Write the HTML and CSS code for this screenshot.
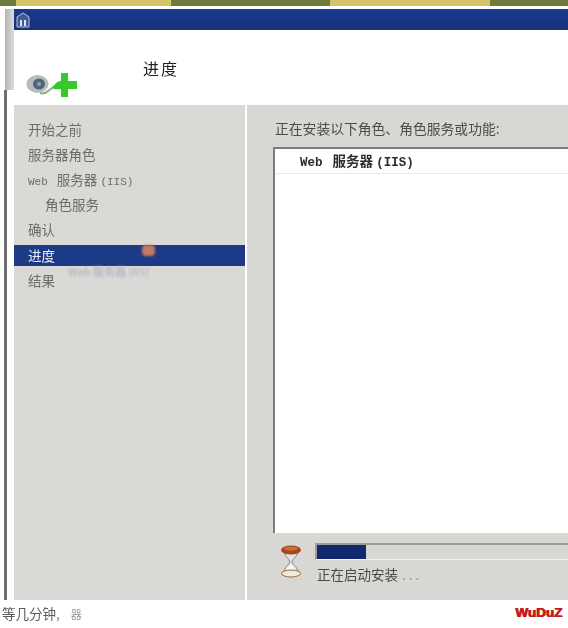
FILE: index.html
```html
<!DOCTYPE html>
<html lang="zh-CN">
<head>
    <meta charset="UTF-8">
    <meta name="viewport" content="width=device-width, initial-scale=1.0">
    <title>进度</title>
    <link rel="stylesheet" href="styles.css">
</head>
<body>
    <div class="topstrip">
        <div class="tab tab-first"></div>
        <div class="tab tab-second"></div>
    </div>
    <div class="desk">
        <div class="gutter">
            <div class="gutter-bar"></div>
            <div class="gutter-frame"></div>
        </div>
        <div class="window">
            <div class="titlebar">
                <svg class="title-icon" width="14" height="16" viewBox="0 0 14 16">
                    <path d="M1 5 L7 1 L13 5 V15 H1 Z" fill="#3f5a94" stroke="#b9c6de" stroke-width="1"/>
                    <path d="M4 8 H6 V14 H4 Z M8 8 H10 V14 H8 Z" fill="#dfe6f2"/>
                </svg>
            </div>
            <div class="header">
                <svg class="header-icon" width="56" height="28" viewBox="0 0 56 28">
                    <ellipse cx="11.5" cy="13" rx="11" ry="9" fill="#b4bec2"/>
                    <ellipse cx="13" cy="13" rx="6" ry="5.5" fill="#4f6676"/>
                    <circle cx="13" cy="13" r="2" fill="#8fa2ae"/>
                    <path d="M14 22 C20 24 24 18 30 14" fill="none" stroke="#8fae84" stroke-width="2"/>
                    <path d="M35 2 H42 V10 H51 V18 H42 V26 H35 V18 C31 18 29 19 26 17 C29 13 31 10 35 10 Z" fill="#35c92b"/>
                </svg>
                <div class="header-title">进度</div>
            </div>
            <div class="content">
                <div class="sidebar">
                    <div class="step">开始之前</div>
                    <div class="step">服务器角色</div>
                    <div class="step"><span class="latin latin-web">Web</span> 服务器 <span class="latin">(IIS)</span></div>
                    <div class="step step-sub">角色服务</div>
                    <div class="step">确认</div>
                    <div class="step step-active">进度<span class="blob"></span></div>
                    <div class="step step-result">结果<span class="ghost">Web 服务器 (IIS)</span></div>
                </div>
                <div class="main">
                    <div class="intro">正在安装以下角色、角色服务或功能:</div>
                    <div class="listbox">
                        <div class="list-row"><span class="latin latin-web">Web</span> 服务器 <span class="latin">(IIS)</span></div>
                    </div>
                    <div class="status">
                        <svg class="hourglass" width="22" height="33" viewBox="0 0 22 33">
                            <path d="M4 7 H18 C17 12 13 13 12 17 C13 20 18 22 18 28 H4 C4 22 9 20 10 17 C9 13 5 12 4 7 Z" fill="#dfe4e6" stroke="#85857f" stroke-width="1"/>
                            <path d="M5 27 C6 23 9 22 11 20 C13 22 16 23 17 27 Z" fill="#fbf8f0"/>
                            <ellipse cx="11" cy="5" rx="10" ry="4.5" fill="#a8481a"/>
                            <ellipse cx="11" cy="3.5" rx="7" ry="2" fill="#c9703a"/>
                            <ellipse cx="11" cy="28.5" rx="9.5" ry="3.5" fill="#f2eadb" stroke="#96683f" stroke-width="1"/>
                        </svg>
                        <div class="status-right">
                            <div class="progress"><div class="progress-fill"></div></div>
                            <div class="status-text">正在启动安装<span class="dots">...</span></div>
                        </div>
                    </div>
                </div>
            </div>
        </div>
    </div>
    <div class="footer">
        <div class="caption">等几分钟<span class="caption-dot">,</span><span class="caption-mark">器</span></div>
        <div class="brand">WuDuZ</div>
    </div>
</body>
</html>
```

FILE: styles.css
```css
html, body { margin: 0; padding: 0; }
body { width: 568px; height: 628px; overflow: hidden; background-color: #fff; font-family: "Noto Sans CJK SC", sans-serif; display: flex; flex-direction: column; }

.topstrip { height: 6px; background-color: #6d7a3c; display: flex; flex-shrink: 0; }
.tab { height: 6px; background-color: #d6c468; }
.tab-first { width: 155px; margin-left: 16px; }
.tab-second { width: 160px; margin-left: 159px; }

.desk { height: 594px; display: flex; flex-shrink: 0; padding-top: 3px; box-sizing: border-box; }
.gutter { width: 14px; flex-shrink: 0; display: flex; flex-direction: column; }
.gutter-bar { height: 81px; width: 9px; margin-left: 5px; background: linear-gradient(90deg, #b4b4b0, #dcdcd8); }
.gutter-frame { flex: 1; width: 5px; margin-left: 4px; border-left: 3px solid #6e6e6e; box-sizing: border-box; }

.window { flex: 1; min-width: 0; display: flex; flex-direction: column; }
.titlebar { height: 21px; background: linear-gradient(#1a3a8e, #16317c); display: flex; align-items: center; padding-left: 2px; flex-shrink: 0; }
.title-icon { display: block; }

.header { height: 75px; background-color: #fff; display: flex; flex-shrink: 0; }
.header-icon { margin: 41px 0 0 12px; filter: blur(0.5px); }
.header-title { margin: 27px 0 0 61px; font-size: 16px; line-height: 22px; color: #222; filter: blur(0.7px); letter-spacing: 2px; }

.content { flex: 1; display: flex; min-height: 0; }
.sidebar { width: 231px; flex-shrink: 0; background-color: #dbd9d5; padding-top: 14px; box-sizing: border-box; }
.step { height: 21px; margin-bottom: 4px; padding-left: 14px; font-size: 13.5px; line-height: 21px; color: #6c6c6a; white-space: nowrap; filter: blur(0.4px); position: relative; }
.step-sub { padding-left: 31px; }
.step-active { background-color: #1c3a86; color: #e8ecf5; top: 1px; }
.step-result { margin-top: 5px; }
.latin { font-family: "Liberation Mono", monospace; font-size: 11px; }
.latin-web { margin-right: 6px; }
.blob { position: absolute; left: 128px; top: 0; width: 13px; height: 11px; background-color: #c27a66; border-radius: 4px; filter: blur(1px); }
.ghost { position: absolute; left: 54px; top: -9px; font-size: 11px; color: #a9adc0; filter: blur(0.8px); }

.main { flex: 1; min-width: 0; margin-left: 2px; background-color: #d9d7d3; padding: 13px 0 0 26px; box-sizing: border-box; display: flex; flex-direction: column; }
.intro { margin-left: 2px; font-size: 13.8px; line-height: 20px; height: 29px; color: #4c4c4c; white-space: nowrap; filter: blur(0.4px); }
.listbox { height: 386px; background-color: #fff; border-top: 2px solid #7c7c7a; border-left: 2px solid #7c7c7a; box-sizing: border-box; flex-shrink: 0; }
.list-row { height: 25px; padding-left: 25px; font-size: 13.5px; font-weight: 700; line-height: 23px; color: #2c2c2c; border-bottom: 1px solid #e6ecf2; box-sizing: border-box; white-space: nowrap; filter: blur(0.4px); }
.list-row .latin { font-size: 12.5px; }
.list-row .latin-web { margin-right: 7px; }

.status { display: flex; padding-top: 10px; }
.hourglass { margin: 2px 0 0 7px; flex-shrink: 0; filter: blur(0.5px); }
.status-right { flex: 1; min-width: 0; margin-left: 13px; }
.progress { height: 17px; border-top: 2px solid #9b9b98; border-left: 2px solid #9b9b98; border-bottom: 1px solid #f3f3f0; box-sizing: border-box; background-color: #d9d7d3; }
.progress-fill { width: 49px; height: 14px; background-color: #12296f; }
.status-text { margin: 4px 0 0 2px; font-size: 13.5px; line-height: 20px; color: #4a4a4a; white-space: nowrap; filter: blur(0.4px); }
.dots { margin-left: 4px; letter-spacing: 3px; color: #8a8a88; }

.footer { flex: 1; display: flex; justify-content: space-between; align-items: flex-start; padding: 3px 6px 0 2px; }
.caption { font-size: 13.5px; line-height: 20px; color: #5a5a5a; white-space: nowrap; filter: blur(0.4px); }
.caption-dot { color: #8a8a8a; }
.caption-mark { font-size: 11px; color: #999; margin-left: 11px; }
.brand { font-family: "Liberation Sans", sans-serif; font-size: 13.5px; line-height: 20px; font-weight: 700; color: #c41a1a; text-shadow: 1px 0 0 #c41a1a; }
```
